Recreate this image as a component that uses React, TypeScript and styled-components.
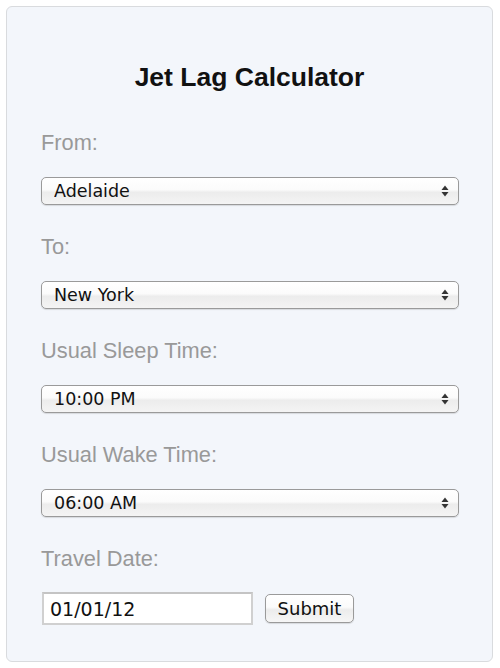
import React, { useState } from 'react';
import styled, { createGlobalStyle } from 'styled-components';

const GlobalStyle = createGlobalStyle`
  html, body {
    margin: 0;
    padding: 0;
    background: #ffffff;
  }
  body {
    padding: 6px;
    font-family: "Liberation Sans", Arial, sans-serif;
  }
`;

const Panel = styled.form`
  width: 487px;
  box-sizing: border-box;
  height: 656px;
  border: 1px solid #d9dbde;
  border-radius: 6px;
  background: #f3f6fb;
  padding: 55px 34px 0 34px;
  display: flex;
  flex-direction: column;
`;

const Title = styled.h1`
  margin: 0 0 38px 0;
  font-family: "Liberation Sans", Arial, sans-serif;
  font-size: 26.5px;
  line-height: 30px;
  font-weight: bold;
  color: #111;
  text-align: center;
`;

const Field = styled.div`
  display: flex;
  flex-direction: column;
  margin-bottom: 29px;
`;

const Label = styled.label`
  font-family: "Liberation Sans", Arial, sans-serif;
  font-size: 21.8px;
  line-height: 26px;
  color: #999999;
  margin-bottom: 21px;
`;

const SelectWrap = styled.div`
  position: relative;
  width: 418px;
  height: 28px;
`;

const Select = styled.select`
  appearance: none;
  -webkit-appearance: none;
  width: 100%;
  height: 100%;
  box-sizing: border-box;
  border: 1px solid #9a9a9a;
  border-radius: 5px;
  background: linear-gradient(#ffffff 0%, #fbfbfb 45%, #ececec 55%, #f4f4f4 100%);
  box-shadow: 0 1px 1px rgba(0, 0, 0, 0.12);
  padding: 0 30px 0 12px;
  font-family: "DejaVu Sans", "Lucida Grande", sans-serif;
  font-size: 17.5px;
  color: #111;
  outline: none;
`;

const Arrows = styled.svg`
  position: absolute;
  right: 10px;
  top: 8px;
  pointer-events: none;
`;

const Row = styled.div`
  display: flex;
  align-items: center;
  gap: 12px;
  margin-left: 1px;
  margin-top: -1px;
`;

const DateInput = styled.input`
  width: 211px;
  height: 33px;
  box-sizing: border-box;
  border: 2px solid #d0d0d0;
  border-top-color: #c4c4c4;
  background: #fff;
  padding: 0 6px;
  font-family: "DejaVu Sans", "Lucida Grande", sans-serif;
  font-size: 19px;
  color: #111;
  outline: none;
`;

const SubmitButton = styled.button`
  width: 89px;
  height: 29px;
  box-sizing: border-box;
  border: 1px solid #9a9a9a;
  border-radius: 5px;
  background: linear-gradient(#ffffff 0%, #fbfbfb 45%, #ececec 55%, #f6f6f6 100%);
  box-shadow: 0 1px 1px rgba(0, 0, 0, 0.12);
  font-family: "DejaVu Sans", "Lucida Grande", sans-serif;
  font-size: 18px;
  color: #111;
  padding: 0;
`;

const cities = ['Adelaide', 'New York', 'London', 'Tokyo', 'Sydney'];
const times = ['06:00 AM', '07:00 AM', '08:00 AM', '10:00 PM', '11:00 PM'];

const Dropdown = ({ value, options, onChange }: { value: string; options: string[]; onChange: (v: string) => void }) => (
  <SelectWrap>
    <Select value={value} onChange={(e) => onChange(e.target.value)}>
      {options.map((o) => (
        <option key={o} value={o}>
          {o}
        </option>
      ))}
    </Select>
    <Arrows width="8" height="12" viewBox="0 0 8 12">
      <path d="M4 0.5 L7.5 5 L0.5 5 Z" fill="#333" />
      <path d="M4 11.5 L7.5 7 L0.5 7 Z" fill="#333" />
    </Arrows>
  </SelectWrap>
);

const App = () => {
  const [from, setFrom] = useState('Adelaide');
  const [to, setTo] = useState('New York');
  const [sleep, setSleep] = useState('10:00 PM');
  const [wake, setWake] = useState('06:00 AM');
  const [date, setDate] = useState('01/01/12');

  return (
    <>
      <GlobalStyle />
      <Panel onSubmit={(e) => e.preventDefault()}>
        <Title>Jet Lag Calculator</Title>
        <Field>
          <Label>From:</Label>
          <Dropdown value={from} options={cities} onChange={setFrom} />
        </Field>
        <Field>
          <Label>To:</Label>
          <Dropdown value={to} options={cities} onChange={setTo} />
        </Field>
        <Field>
          <Label>Usual Sleep Time:</Label>
          <Dropdown value={sleep} options={times} onChange={setSleep} />
        </Field>
        <Field>
          <Label>Usual Wake Time:</Label>
          <Dropdown value={wake} options={times} onChange={setWake} />
        </Field>
        <Field>
          <Label>Travel Date:</Label>
          <Row>
            <DateInput value={date} onChange={(e) => setDate(e.target.value)} />
            <SubmitButton type="submit">Submit</SubmitButton>
          </Row>
        </Field>
      </Panel>
    </>
  );
};

export default App;
